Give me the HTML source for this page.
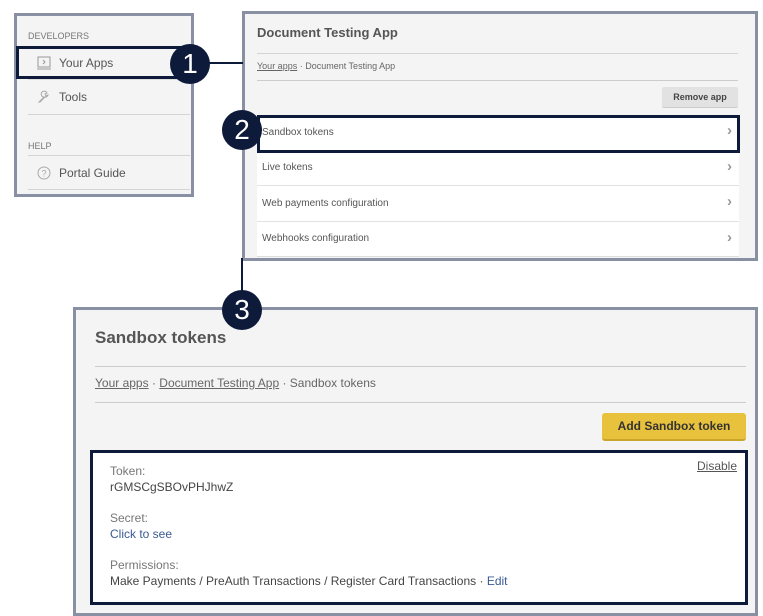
<!DOCTYPE html>
<html><head><meta charset="utf-8"><style>
*{box-sizing:border-box;margin:0;padding:0}
body{width:763px;height:616px;background:#fff;position:relative;overflow:hidden;font-family:"Liberation Sans",sans-serif;color:#555}
.abs{position:absolute}
.panel{position:absolute;border:3px solid #8a90a3;background:#f4f4f4}
.hl{position:absolute;border:3px solid #0d1a3a}
.circ{position:absolute;width:40px;height:40px;border-radius:50%;background:#0d1a3a;color:#fff;font-size:28px;text-align:center;line-height:40px;font-weight:normal}
.line{position:absolute;background:#0d1a3a}
.hr{position:absolute;height:1px;background:#d4d4d4}
.t{position:absolute;white-space:nowrap}
.chev{position:absolute;left:727px;color:#999;font-size:15px;font-weight:bold}
</style></head><body>

<div class="panel" style="left:14px;top:13px;width:180px;height:184px"></div>
<div class="t" style="left:28px;top:31px;font-size:9px;color:#777">DEVELOPERS</div>
<div class="hr" style="left:28px;top:79px;width:162px;background:#ddd"></div>
<svg class="abs" style="left:37px;top:56px" width="14" height="14" viewBox="0 0 14 14"><rect x="1" y="1" width="12" height="10" fill="none" stroke="#999"/><path d="M0 13h14" stroke="#999"/><path d="M6 4l2 2-2 2" fill="none" stroke="#999"/></svg>
<div class="t" style="left:59px;top:56px;font-size:12px;color:#555">Your Apps</div>
<svg class="abs" style="left:37px;top:90px" width="14" height="14" viewBox="0 0 14 14"><path d="M3 12l5-5a3 3 0 1 1 2-4l-2 1 1 2 2-1a3 3 0 0 1-4 2l-5 5z" fill="none" stroke="#aaa"/></svg>
<div class="t" style="left:59px;top:90px;font-size:12px">Tools</div>
<div class="hr" style="left:28px;top:114px;width:162px"></div>
<div class="t" style="left:28px;top:141px;font-size:9px;color:#777">HELP</div>
<div class="hr" style="left:28px;top:155px;width:162px"></div>
<svg class="abs" style="left:37px;top:166px" width="14" height="14" viewBox="0 0 14 14"><circle cx="7" cy="7" r="6" fill="none" stroke="#aaa"/><text x="7" y="10.5" font-size="9" text-anchor="middle" fill="#aaa" font-family="Liberation Sans">?</text></svg>
<div class="t" style="left:59px;top:166px;font-size:12px">Portal Guide</div>
<div class="hr" style="left:28px;top:189px;width:162px"></div>
<div class="hl" style="left:16px;top:46px;width:176px;height:33px"></div>

<div class="panel" style="left:242px;top:11px;width:516px;height:250px"></div>
<div class="t" style="left:257px;top:25px;font-size:13px;font-weight:bold;color:#555">Document Testing App</div>
<div class="hr" style="left:257px;top:53px;width:481px"></div>
<div class="t" style="left:257px;top:61px;font-size:9px;color:#666"><u>Your apps</u> · Document Testing App</div>
<div class="hr" style="left:257px;top:80px;width:481px;background:#ccc"></div>
<div class="abs" style="left:662px;top:87px;width:76px;height:21px;background:#e2e2e2;border-radius:2px;border-bottom:1px solid #ccc;font-size:9px;font-weight:bold;color:#444;text-align:center;line-height:21px">Remove app</div>
<div class="abs" style="left:257px;top:116px;width:482px;height:141px;background:#fff"></div>
<div class="t" style="left:262px;top:127px;font-size:10px">Sandbox tokens</div>
<div class="chev" style="top:122px">›</div>
<div class="hr" style="left:257px;top:185px;width:482px;background:#e2e2e2"></div>
<div class="t" style="left:262px;top:162px;font-size:10px">Live tokens</div><div class="chev" style="top:158px">›</div>
<div class="hr" style="left:257px;top:221px;width:482px;background:#e2e2e2"></div>
<div class="t" style="left:262px;top:198px;font-size:10px">Web payments configuration</div><div class="chev" style="top:193px">›</div>
<div class="t" style="left:262px;top:233px;font-size:10px">Webhooks configuration</div><div class="chev" style="top:229px">›</div>
<div class="hr" style="left:257px;top:256px;width:482px;background:#ddd"></div>
<div class="hl" style="left:257px;top:115px;width:483px;height:38px"></div>

<div class="line" style="left:208px;top:62px;width:35px;height:2px"></div>
<div class="line" style="left:241px;top:258px;width:2px;height:40px"></div>
<div class="circ" style="left:170px;top:44px">1</div>
<div class="circ" style="left:222px;top:110px">2</div>

<div class="panel" style="left:73px;top:307px;width:685px;height:309px"></div>
<div class="circ" style="left:222px;top:290px">3</div>
<div class="t" style="left:95px;top:328px;font-size:17px;font-weight:bold;color:#555">Sandbox tokens</div>
<div class="hr" style="left:95px;top:366px;width:651px;background:#ccc"></div>
<div class="t" style="left:95px;top:376px;font-size:12px;color:#666"><u>Your apps</u> · <u>Document Testing App</u> · Sandbox tokens</div>
<div class="hr" style="left:95px;top:402px;width:651px;background:#ccc"></div>
<div class="abs" style="left:602px;top:413px;width:144px;height:28px;background:#e8c23c;border-radius:3px;border-bottom:2px solid #c9a52c;font-size:12px;font-weight:bold;color:#333;text-align:center;line-height:27px">Add Sandbox token</div>
<div class="abs" style="left:90px;top:450px;width:658px;height:155px;background:#fff;border:3px solid #0d1a3a"></div>
<div class="t" style="left:697px;top:459px;font-size:12px;color:#555"><u>Disable</u></div>
<div class="t" style="left:110px;top:464px;font-size:12px;color:#777">Token:</div>
<div class="t" style="left:110px;top:480px;font-size:12px;color:#444">rGMSCgSBOvPHJhwZ</div>
<div class="t" style="left:110px;top:511px;font-size:12px;color:#777">Secret:</div>
<div class="t" style="left:110px;top:527px;font-size:12px;color:#3a5a94">Click to see</div>
<div class="t" style="left:110px;top:558px;font-size:12px;color:#777">Permissions:</div>
<div class="t" style="left:110px;top:574px;font-size:12px;color:#444">Make Payments / PreAuth Transactions / Register Card Transactions · <span style="color:#3a5a94">Edit</span></div>
</body></html>
